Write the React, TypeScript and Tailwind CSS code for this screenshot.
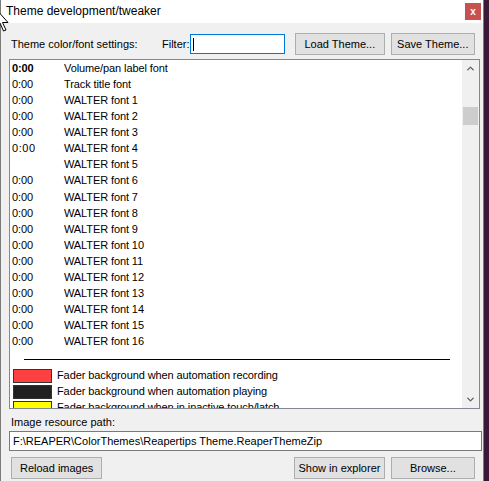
import { ChevronDown, ChevronUp } from "lucide-react";

type FontRow = { time: string; label: string; style?: "bold" | "wide" };

const fontRows: FontRow[] = [
  { time: "0:00", label: "Volume/pan label font", style: "bold" },
  { time: "0:00", label: "Track title font" },
  { time: "0:00", label: "WALTER font 1" },
  { time: "0:00", label: "WALTER font 2" },
  { time: "0:00", label: "WALTER font 3" },
  { time: "0:00", label: "WALTER font 4", style: "wide" },
  { time: "", label: "WALTER font 5" },
  { time: "0:00", label: "WALTER font 6" },
  { time: "0:00", label: "WALTER font 7" },
  { time: "0:00", label: "WALTER font 8" },
  { time: "0:00", label: "WALTER font 9" },
  { time: "0:00", label: "WALTER font 10" },
  { time: "0:00", label: "WALTER font 11" },
  { time: "0:00", label: "WALTER font 12" },
  { time: "0:00", label: "WALTER font 13" },
  { time: "0:00", label: "WALTER font 14" },
  { time: "0:00", label: "WALTER font 15" },
  { time: "0:00", label: "WALTER font 16" },
];

const colorRows = [
  { swatch: "bg-[#ff4040]", label: "Fader background when automation recording" },
  { swatch: "bg-[#202020]", label: "Fader background when automation playing" },
  { swatch: "bg-[#ffff00]", label: "Fader background when in inactive touch/latch" },
];

const WinButton = ({ label, className }: { label: string; className: string }) => (
  <button
    className={`h-[22px] border border-[#adadad] bg-[#e1e1e1] text-[11px] text-black ${className}`}
  >
    {label}
  </button>
);

// mouse pointer resting on the window's top-left corner
const Cursor = () => (
  <svg className="absolute left-[-5px] top-[8px]" width="16" height="28" viewBox="0 0 16 28">
    <path
      d="M1 1 L1 19 L5 15 L8.5 23 L11 22 L7.5 14.5 L13 14.5 Z"
      fill="#fff"
      stroke="#000"
      strokeWidth="1"
    />
  </svg>
);

export default function App() {
  return (
    <div
      className="relative flex h-[481px] w-[489px] overflow-hidden bg-[#3b1836]"
      style={{ fontFamily: '"Liberation Sans", Arial, sans-serif' }}
    >
      <div className="flex w-[484px] flex-col border-l border-r border-[#7b7b7b] bg-[#f0f0f0]">
        {/* title bar */}
        <div className="flex h-[23px] items-start justify-between bg-white">
          <span className="pl-[5px] pt-[4px] text-[12px] leading-[15px] text-black">
            Theme development/tweaker
          </span>
          <div className="mr-[2px] mt-[3px] flex h-[17px] w-[16px] items-center justify-center bg-[#c75050] text-[10px] font-bold leading-none text-white">
            x
          </div>
        </div>

        <div className="flex flex-1 flex-col px-[8px] pt-[10px]">
          {/* toolbar */}
          <div className="flex h-[22px] items-center text-[11px] text-black">
            <span className="ml-[2px] w-[152px]">Theme color/font settings:</span>
            <span className="w-[28px]">Filter:</span>
            <div className="flex h-[20px] w-[96px] items-center border border-[#0078d7] bg-white pl-[2px]">
              <div className="h-[13px] w-px bg-black" />
            </div>
            <WinButton label="Load Theme..." className="ml-[10px] w-[90px]" />
            <WinButton label="Save Theme..." className="ml-[6px] w-[85px]" />
          </div>

          {/* theme item list */}
          <div className="mt-[4px] flex h-[350px] w-[471px] border border-[#828790] bg-white">
            <div className="flex-1 overflow-hidden text-[11px] tracking-[-0.1px] text-black">
              {fontRows.map((r) => (
                <div key={r.label} className="flex h-[16.1px] items-center">
                  <span
                    className={`w-[54px] pl-[2px] ${
                      r.style === "bold" ? "font-bold" : r.style === "wide" ? "tracking-[0.6px]" : ""
                    }`}
                  >
                    {r.time}
                  </span>
                  <span>{r.label}</span>
                </div>
              ))}
              <div className="ml-[14px] mt-[9px] h-px w-[426px] bg-black" />
              <div className="mt-[9px] flex flex-col gap-[2px]">
                {colorRows.map((c) => (
                  <div key={c.label} className="flex h-[14px] items-center">
                    <div className={`ml-[3px] h-[14px] w-[39px] border border-[#333] ${c.swatch}`} />
                    <span className="ml-[5px]">{c.label}</span>
                  </div>
                ))}
              </div>
            </div>
            {/* scrollbar */}
            <div className="flex w-[17px] flex-col items-center bg-[#f0f0f0]">
              <div className="flex h-[17px] items-center justify-center">
                <ChevronUp size={11} strokeWidth={3} color="#606060" />
              </div>
              <div className="mt-[30px] h-[18px] w-[15px] bg-[#cdcdcd]" />
              <div className="flex-1" />
              <div className="flex h-[17px] items-center justify-center">
                <ChevronDown size={11} strokeWidth={3} color="#606060" />
              </div>
            </div>
          </div>

          <div className="ml-[2px] mt-[6px] text-[11px] leading-[14px] text-black">
            Image resource path:
          </div>
          <div className="mt-[2px] flex h-[20px] w-[473px] items-center border border-[#7a7a7a] bg-white pl-[3px] text-[11px] text-black">
            F:\REAPER\ColorThemes\Reapertips Theme.ReaperThemeZip
          </div>

          <div className="mt-[6px] flex">
            <WinButton label="Reload images" className="ml-[2px] w-[92px]" />
            <WinButton label="Show in explorer" className="ml-[192px] w-[91px]" />
            <WinButton label="Browse..." className="ml-[6px] w-[85px]" />
          </div>
        </div>
      </div>
      <Cursor />
    </div>
  );
}
